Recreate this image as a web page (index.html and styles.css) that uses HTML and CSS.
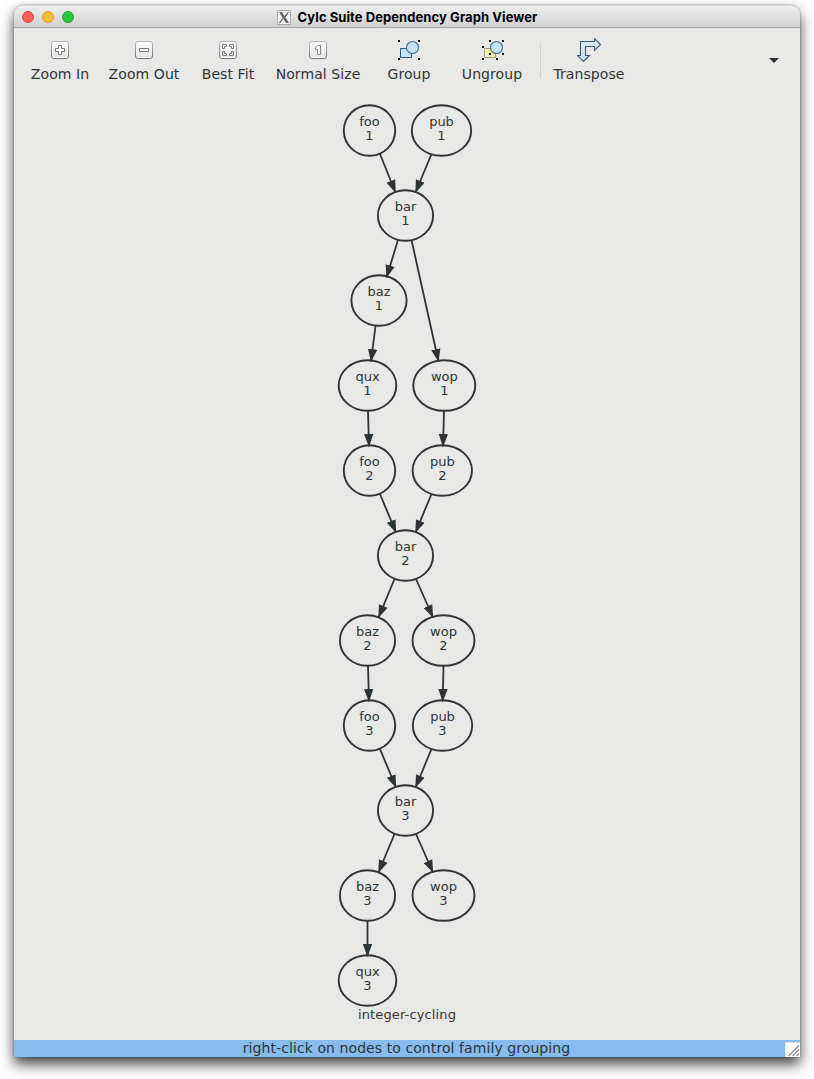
FILE: index.html
```html
<!DOCTYPE html>
<html lang="en">
<head>
<meta charset="utf-8">
<title>Cylc Suite Dependency Graph Viewer</title>
<link rel="stylesheet" href="styles.css">
</head>
<body>
<main class="window">
  <header class="titlebar">
    <div class="lights"><span class="light close"></span><span class="light minimize"></span><span class="light maximize"></span></div>
    <div class="title">
      <svg class="x-icon" width="14" height="15" viewBox="0 0 14 15"><path d="M.5.5h13v14H.5z" fill="#f2f2f2" stroke="#a8a8a8"/><path d="M2 2h3l7 11H9z" fill="#666"/><path d="M11.5 2 8 6.8M6 8.5 2.5 13" stroke="#444" stroke-width="1.1"/></svg>
      <h1 class="title-text">Cylc Suite Dependency Graph Viewer</h1>
    </div>
  </header>
  <nav class="toolbar">
    <button class="tool zoom-in">
      <svg class="icon" width="24" height="24" viewBox="0 0 24 24"><use href="#key"/><path d="M10.500 7.500h3v3h3v3h-3v3h-3v-3h-3v-3h3z" fill="#fff" stroke="#777"/></svg>
      <span class="label">Zoom In</span>
    </button>
    <button class="tool zoom-out">
      <svg class="icon" width="24" height="24" viewBox="0 0 24 24"><use href="#key"/><path d="M7.500 10.500h9v3h-9z" fill="#fff" stroke="#777"/></svg>
      <span class="label">Zoom Out</span>
    </button>
    <button class="tool best-fit">
      <svg class="icon" width="24" height="24" viewBox="0 0 24 24"><use href="#key"/><path d="M6.500 6.500h4v2h-2v2h-2zM13.500 6.500h4v4h-2v-2h-2zM6.500 13.500h2v2h2v2h-4zM15.500 13.500h2v4h-4v-2h2z" fill="#fff" stroke="#777"/></svg>
      <span class="label">Best Fit</span>
    </button>
    <button class="tool normal-size">
      <svg class="icon" width="24" height="24" viewBox="0 0 24 24"><use href="#key"/><path d="M11.500 7.500h3v9h-3v-5h-2v-2z" fill="#fff" stroke="#888"/></svg>
      <span class="label">Normal Size</span>
    </button>
    <button class="tool group">
      <svg class="icon" width="24" height="24" viewBox="0 0 24 24"><path d="M3.500 10.500h11v9h-11z" fill="#c5e4fa" stroke="#35586e"/><circle cx="15.500" cy="9.500" r="6" fill="#c5e4fa" stroke="#4d7188" stroke-width="1.200"/><path d="M1 2h2v2H1zM21 2h2v2h-2zM1 20h2v2H1zM21 20h2v2h-2z" fill="#000"/></svg>
      <span class="label">Group</span>
    </button>
    <button class="tool ungroup">
      <svg class="icon" width="24" height="24" viewBox="0 0 24 24"><path d="M4.500 10.500h11v9h-11z" fill="#f3efa0" stroke="#999"/><circle cx="16.500" cy="9.500" r="6" fill="#c5e4fa" stroke="#4d7188" stroke-width="1.200"/><path d="M9 2h2v2H9zM22 2h2v2h-2zM2 8h2v2H2zM9 15h2v2H9zM22 15h2v2h-2zM2 20h2v2H2zM16 20h2v2h-2z" fill="#000"/></svg>
      <span class="label">Ungroup</span>
    </button>
    <span class="separator"></span>
    <button class="tool transpose">
      <svg class="icon" width="24" height="24" viewBox="0 0 24 24"><path d="M3.500 3.500h14v-3l6 6-6 6v-4h-9v9h4l-6 6-6-6h3z" fill="#d5e9f3" stroke="#3c5478" stroke-width="1.100"/></svg>
      <span class="label">Transpose</span>
    </button>
    <svg class="overflow" width="10" height="5" viewBox="0 0 10 5"><path d="M0 0h10L5 5z" fill="#2e3436"/></svg>
  </nav>
  <svg class="graph" width="786" height="944" viewBox="14 96 786 944">
    <defs>
      <linearGradient id="face" x1="0" y1="0" x2="0" y2="1"><stop offset="0" stop-color="#fff"/><stop offset="1" stop-color="#e2e2e0"/></linearGradient>
      <linearGradient id="rim" x1="0" y1="0" x2="0" y2="1"><stop offset="0" stop-color="#b8b8b6"/><stop offset="1" stop-color="#737371"/></linearGradient>
      <g id="key"><rect x="3.500" y="3.500" width="17" height="17" rx="2.500" fill="url(#face)" stroke="url(#rim)"/><path d="M5 19.500h14" stroke="#fff"/></g>
      <marker id="arrow" markerUnits="userSpaceOnUse" markerWidth="14" markerHeight="10" refX="12.500" refY="5" orient="auto"><path d="M0 .3 13 5 0 9.700z" fill="#2e3436"/></marker>
    </defs>
    <g class="edges">
      <path d="M380 154 395.500 192.500"/><path d="M431.500 154 415.500 192.500"/>
      <path d="M398 240 386.500 277.500"/><path d="M411.500 240 438.500 361.500"/>
      <path d="M375.500 326 371 361.500"/><path d="M368 411 369 446.500"/><path d="M444 411 443 446.500"/>
      <path d="M380 494 396 532.500"/><path d="M431.500 494 415.500 532.500"/>
      <path d="M394.500 579 378.500 617.500"/><path d="M416 579 433 617.500"/>
      <path d="M368 666 369 701.500"/><path d="M443.500 666 442.700 701.500"/>
      <path d="M380 749 396 787.500"/><path d="M431.500 749 415.500 787.500"/>
      <path d="M394.500 834 378.500 872.500"/><path d="M416 834 433 872.500"/>
      <path d="M367.500 921V956.500"/>
    </g>
    <g class="nodes">
      <g><ellipse cx="369.500" cy="130.500" rx="25.700" ry="25.300"/><text x="369.500" y="126">foo</text><text x="369.500" y="140">1</text></g>
      <g><ellipse cx="441.500" cy="130.500" rx="29.700" ry="25.300"/><text x="441.500" y="126">pub</text><text x="441.500" y="140">1</text></g>
      <g><ellipse cx="405.500" cy="215.500" rx="27.600" ry="25.300"/><text x="405.500" y="211">bar</text><text x="405.500" y="225">1</text></g>
      <g><ellipse cx="379" cy="300.500" rx="27.600" ry="25.300"/><text x="379" y="296">baz</text><text x="379" y="310">1</text></g>
      <g><ellipse cx="367.500" cy="385.500" rx="28.800" ry="25.300"/><text x="367.500" y="381">qux</text><text x="367.500" y="395">1</text></g>
      <g><ellipse cx="444.300" cy="385.500" rx="31" ry="25.300"/><text x="444.300" y="381">wop</text><text x="444.300" y="395">1</text></g>
      <g><ellipse cx="369.500" cy="470.500" rx="25.700" ry="25.300"/><text x="369.500" y="466">foo</text><text x="369.500" y="480">2</text></g>
      <g><ellipse cx="442.300" cy="470.500" rx="29.700" ry="25.300"/><text x="442.300" y="466">pub</text><text x="442.300" y="480">2</text></g>
      <g><ellipse cx="405.500" cy="555.500" rx="27.600" ry="25.300"/><text x="405.500" y="551">bar</text><text x="405.500" y="565">2</text></g>
      <g><ellipse cx="367.500" cy="640.500" rx="27.600" ry="25.300"/><text x="367.500" y="636">baz</text><text x="367.500" y="650">2</text></g>
      <g><ellipse cx="443.500" cy="640.500" rx="31" ry="25.300"/><text x="443.500" y="636">wop</text><text x="443.500" y="650">2</text></g>
      <g><ellipse cx="369.500" cy="725.500" rx="25.700" ry="25.300"/><text x="369.500" y="721">foo</text><text x="369.500" y="735">3</text></g>
      <g><ellipse cx="442.500" cy="725.500" rx="29.700" ry="25.300"/><text x="442.500" y="721">pub</text><text x="442.500" y="735">3</text></g>
      <g><ellipse cx="405.500" cy="810.500" rx="27.600" ry="25.300"/><text x="405.500" y="806">bar</text><text x="405.500" y="820">3</text></g>
      <g><ellipse cx="367.500" cy="895.500" rx="27.600" ry="25.300"/><text x="367.500" y="891">baz</text><text x="367.500" y="905">3</text></g>
      <g><ellipse cx="443.500" cy="895.500" rx="31" ry="25.300"/><text x="443.500" y="891">wop</text><text x="443.500" y="905">3</text></g>
      <g><ellipse cx="367.500" cy="980.500" rx="28.800" ry="25.300"/><text x="367.500" y="976">qux</text><text x="367.500" y="990">3</text></g>
      <text class="caption" x="407" y="1019">integer-cycling</text>
    </g>
  </svg>
  <footer class="status">
    <span class="status-text">right-click on nodes to control family grouping</span>
    <svg class="grip" width="15" height="15" viewBox="0 0 15 15"><path d="M0 0h15v15H0z" fill="#fff"/><path d="M0 15V.5h15" fill="none" stroke="#ddd"/><path d="M3.500 14 14 3.500M7.500 14 14 7.500M11.500 14l2.500-2.500" stroke="#888" stroke-width="1.200"/></svg>
  </footer>
</main>
</body>
</html>
```

FILE: styles.css
```css
body { margin: 0; height: 1079px; overflow: hidden; background: #fff; font-family: "DejaVu Sans", sans-serif; color: #2e3436; }
.window { display: flex; flex-direction: column; width: 786px; height: 1052px; margin: 5px 0 0 14px; background: #e8e8e6; border-radius: 9px 9px 0 0; box-shadow: 0 0 2px rgba(0,0,0,.4), 0 7px 14px rgba(0,0,0,.75); }
.titlebar { display: grid; grid-template-columns: 1fr auto 1fr; align-items: center; box-sizing: border-box; height: 23px; flex: none; border-top: 1px solid #d6d6d6; border-bottom: 1px solid #a6a6a6; border-radius: 9px 9px 0 0; background: linear-gradient(#eee, #d1d1d1); }
.lights { display: flex; gap: 8px; padding-left: 8px; }
.light { box-sizing: border-box; width: 12px; height: 12px; border: 1px solid #e2463f; border-radius: 50%; background: #ff5f57; }
.minimize { border-color: #dfa023; background: #ffbd2e; }
.maximize { border-color: #1dad2b; background: #28c940; }
.title { display: flex; align-items: center; gap: 7px; }
.title-text { margin: 0; font: 700 13px/20px Inter, sans-serif; letter-spacing: .07px; color: #000; white-space: nowrap; }
.x-icon { margin-top: 2px; }
.toolbar { display: flex; height: 68px; flex: none; padding-left: 4px; }
.tool { display: flex; flex-direction: column; align-items: center; width: 84px; padding: 10px 0 0; border: 0; background: none; color: inherit; font: 14px/20px "DejaVu Sans", sans-serif; letter-spacing: .08px; white-space: nowrap; }
.icon { flex: none; }
.label { margin-top: 2px; }
.normal-size { width: 96px; }
.group { width: 86px; }
.ungroup { width: 80px; }
.separator { width: 1px; height: 35px; margin: 15px 7px 0 8px; background: #d0d0ce; }
.transpose { width: 82px; }
.overflow { margin: 30px 21px 0 auto; }
.graph { display: block; flex: none; }
.edges path { stroke: #2e3436; stroke-width: 1.8; marker-end: url(#arrow); }
.nodes ellipse { fill: none; stroke: #2e3436; stroke-width: 1.9; }
.nodes text { font-size: 13px; text-anchor: middle; fill: #2e3436; }
.nodes .caption { letter-spacing: .13px; }
.status { display: flex; height: 17px; background: #88bbee; font-size: 14px; line-height: 17px; }
.status-text { flex: 1; padding-left: 14px; text-align: center; letter-spacing: .08px; }
.grip { margin-top: 2px; }
```
